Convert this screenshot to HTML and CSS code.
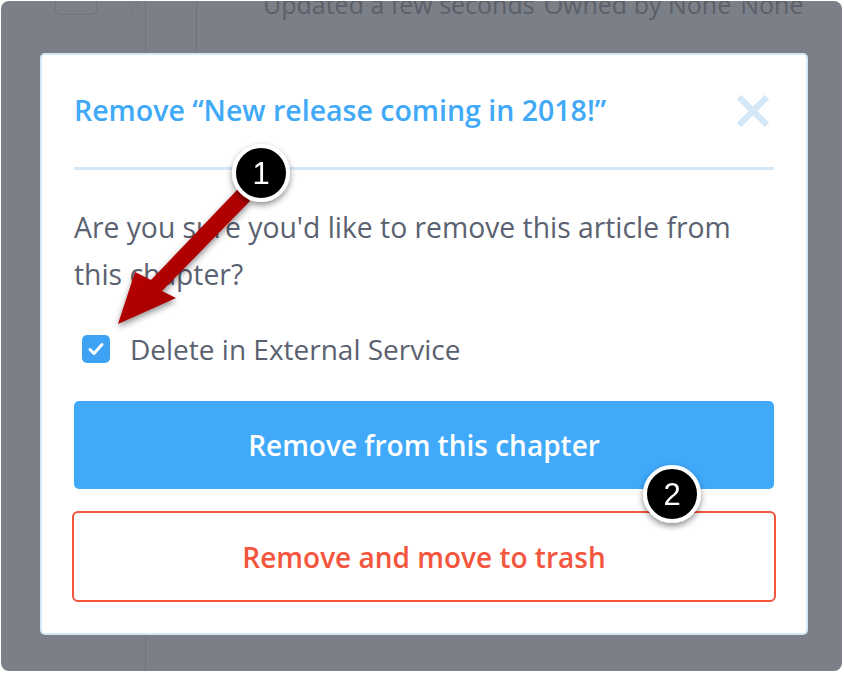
FILE: index.html
```html
<!DOCTYPE html>
<html>
<head>
    <meta charset="UTF-8">
    <title>Remove article</title>
    <link rel="stylesheet" href="styles.css">
</head>
<body>
    <div class="frame">
        <div class="backdrop">
            <div class="bg-side">
                <div class="bg-doc"></div>
                <div class="bg-fold"></div>
            </div>
            <div class="bg-gutter"></div>
            <div class="bg-meta">
                <span>Updated a few seconds</span>
                <span>Owned by None</span>
                <span>None</span>
            </div>
        </div>

        <div class="modal">
            <div class="modal-header">
                <h2 class="modal-title">Remove “New release coming in 2018!”</h2>
                <svg class="close" width="36" height="36" viewBox="0 0 36 36"><path d="M4 4L32 32M32 4L4 32" stroke="#d5e8f8" stroke-width="6.5"/></svg>
            </div>
            <p class="modal-text">Are you sure you'd like to remove this article from this chapter?</p>
            <label class="check-row">
                <span class="checkbox">
                    <svg width="20" height="20" viewBox="0 0 20 20"><path d="M4 10.5l4 4L16 5.5" fill="none" stroke="#fff" stroke-width="3" stroke-linecap="round" stroke-linejoin="round"/></svg>
                </span>
                Delete in External Service
            </label>
            <button class="button button-primary">Remove from this chapter</button>
            <button class="button button-danger">Remove and move to trash</button>
        </div>

        <svg class="callouts" width="844" height="674" viewBox="0 0 844 674">
            <defs>
                <linearGradient id="arrowFill" x1="0" y1="0" x2="1" y2="1">
                    <stop offset="0" stop-color="#c40000"/>
                    <stop offset="1" stop-color="#9a0000"/>
                </linearGradient>
                <filter id="shadow" x="-30%" y="-30%" width="160%" height="170%">
                    <feDropShadow dx="0" dy="3" stdDeviation="3" flood-color="#000" flood-opacity="0.45"/>
                </filter>
            </defs>
            <polygon points="238,189 151,280 135,272 118,324 176,298 162,291 250,201" fill="url(#arrowFill)" filter="url(#shadow)"/>
            <g filter="url(#shadow)">
                <circle cx="261" cy="173" r="27" fill="#000" stroke="#fff" stroke-width="4"/>
                <text x="261" y="184" class="callout-num">1</text>
            </g>
            <g filter="url(#shadow)">
                <circle cx="672" cy="494" r="27" fill="#000" stroke="#fff" stroke-width="4"/>
                <text x="672" y="505" class="callout-num">2</text>
            </g>
        </svg>
    </div>
</body>
</html>
```

FILE: styles.css
```css
body {
    margin: 0;
    background-color: #fff;
    font-family: "Open Sans", "Noto Sans", sans-serif;
}
.frame {
    position: relative;
    width: 841px;
    height: 670px;
    margin: 1px 0 0 1px;
    background-color: #7b7f88;
    border-radius: 8px;
    overflow: hidden;
}
.backdrop {
    display: flex;
    height: 100%;
}
.bg-side {
    position: relative;
    width: 144px;
    border-right: 1px solid #6f737c;
}
.bg-doc {
    width: 40px;
    height: 18px;
    margin: -5px 0 0 54px;
    border: 1px solid #6f737c;
    border-radius: 0 0 5px 5px;
    border-top: none;
}
.bg-fold {
    position: absolute;
    right: -1px;
    top: -5px;
    width: 16px;
    height: 18px;
    border-left: 1px solid #6f737c;
    transform: skewX(-40deg);
    transform-origin: bottom left;
}
.bg-gutter {
    width: 50px;
    height: 52px;
    border-right: 1px solid #6f737c;
}
.bg-meta {
    margin: -14px 0 0 66px;
    display: flex;
    gap: 9px;
    font-size: 25px;
    color: #5c6069;
    white-space: nowrap;
}
.modal {
    position: absolute;
    left: 39px;
    top: 52px;
    width: 700px;
    padding: 0 32px 31px;
    background-color: #fff;
    border: 2px solid #d5e8f8;
    border-radius: 5px;
}
.modal-header {
    display: flex;
    justify-content: space-between;
    align-items: center;
    height: 112px;
    border-bottom: 3px solid #d5e8f8;
}
.modal-title {
    margin: 0 0 2px;
    font-size: 28.5px;
    font-weight: 600;
    color: #40a9f8;
}
.close {
    margin-right: 3px;
}
.modal-text {
    margin: 34px 0 0;
    font-size: 28.3px;
    line-height: 47px;
    color: #5a6170;
}
.check-row {
    display: flex;
    align-items: center;
    gap: 20px;
    margin: 33px 0 0 8px;
    font-size: 28px;
    line-height: 36px;
    color: #5a6170;
}
.checkbox {
    display: flex;
    align-items: center;
    justify-content: center;
    width: 28px;
    height: 28px;
    background-color: #3ea3f5;
    border-radius: 5px;
}
.button {
    display: block;
    width: 100%;
    font-family: inherit;
    font-size: 28px;
    font-weight: 600;
    border-radius: 5px;
    cursor: pointer;
}
.button-primary {
    height: 88px;
    margin-top: 34px;
    background-color: #40a9fa;
    color: #fff;
    border: none;
}
.button-danger {
    width: 704px;
    height: 91px;
    margin: 22px 0 0 -2px;
    background-color: #fff;
    color: #f4553d;
    border: 2px solid #f4553d;
    border-radius: 6px;
}
.callouts {
    position: absolute;
    left: -1px;
    top: -1px;
}
.callout-num {
    font-family: "Liberation Sans", Arial, sans-serif;
    font-size: 31px;
    fill: #fff;
    text-anchor: middle;
}
```
